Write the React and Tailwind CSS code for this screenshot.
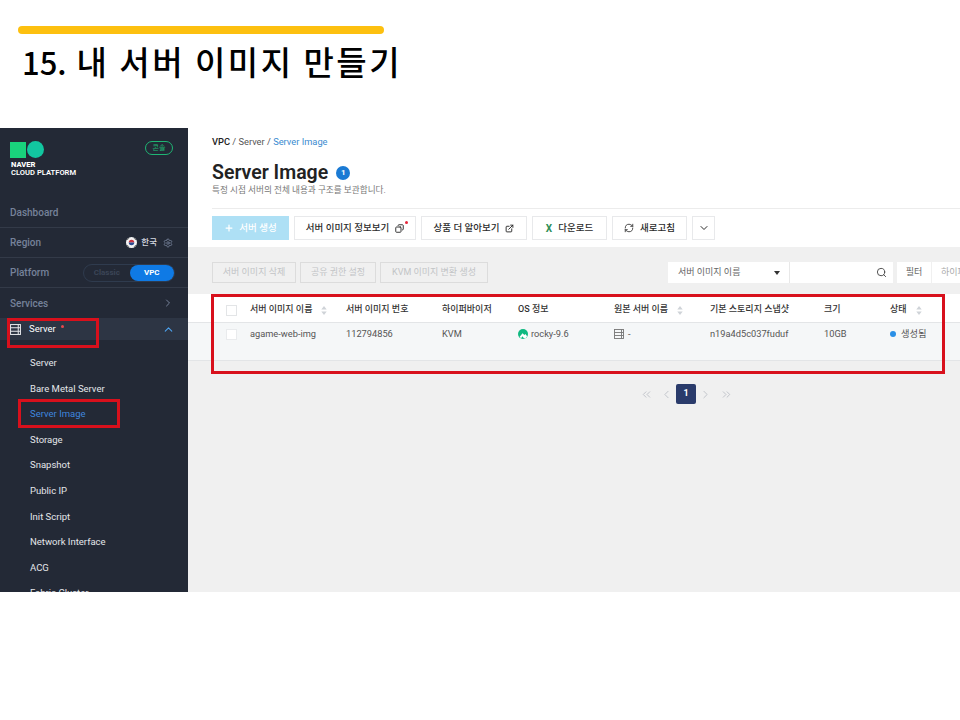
import { ChevronDown, ChevronRight, ChevronUp, ChevronsLeft, ChevronsRight, ChevronLeft, Copy, ExternalLink, RefreshCw, Search, Settings, Plus } from 'lucide-react'

const font = { fontFamily: '"Roboto", "Noto Sans CJK KR", sans-serif' }

const subMenu = ['Server', 'Bare Metal Server', 'Server Image', 'Storage', 'Snapshot', 'Public IP', 'Init Script', 'Network Interface', 'ACG', 'Fabric Cluster']

const ServerIcon = ({ className }) => (
    <svg viewBox="0 0 12 12" className={className} fill="none" stroke="currentColor" strokeWidth="1.1">
        <rect x="0.6" y="0.6" width="10.8" height="10.8" />
        <path d="M0.6 4.2H11.4M0.6 7.8H11.4M9 0.6V11.4" />
    </svg>
)

const Sort = () => (
    <svg viewBox="0 0 6 10" className="w-[6px] h-[9px] text-[#cfd3d8]" fill="currentColor">
        <path d="M3 0L6 4H0ZM3 10L0 6H6Z" />
    </svg>
)

const Flag = () => (
    <svg viewBox="0 0 12 12" className="w-[11px] h-[11px]">
        <circle cx="6" cy="6" r="6" fill="#f4f4f4" />
        <path d="M3 6A3 3 0 0 1 9 6Z" fill="#c8323f" />
        <path d="M3 6A3 3 0 0 0 9 6Z" fill="#2b4a8f" />
        <path d="M1.5 3L3 1.5M9 1.5L10.5 3M1.5 9L3 10.5M9 10.5L10.5 9" stroke="#333" strokeWidth="1" />
    </svg>
)

const Sidebar = () => (
    <div className="w-[188px] h-full bg-[#232936] overflow-hidden shrink-0 flex flex-col">
        <div className="h-[67px] shrink-0 pl-[10px] pr-[15px] pt-[13px] flex justify-between">
            <div>
                <div className="flex items-center gap-[1px]">
                    <div className="w-[16px] h-[16px] bg-[#19d27c]" />
                    <div className="w-[17px] h-[17px] rounded-full bg-[#12c6a0]" />
                </div>
                <div className="mt-[3px] pl-[1px] text-[7.6px] leading-[8px] text-white font-semibold">
                    <div className="font-extrabold">NAVER</div>
                    <div>CLOUD PLATFORM</div>
                </div>
            </div>
            <div className="w-[28px] h-[14px] rounded-full border border-[#1fb574] text-[#1fb574] text-[7px] leading-[12px] text-center">콘솔</div>
        </div>
        <div className="h-[33px] shrink-0 border-b border-[#333a48] pl-[10px] pt-[2px] flex items-center text-[10px] font-medium text-[#76829a]">Dashboard</div>
        <div className="h-[30px] shrink-0 border-b border-[#333a48] pl-[10px] pr-[15px] flex items-center justify-between text-[10px] font-medium text-[#76829a]">
            Region
            <div className="flex items-center gap-[4px] text-[8.5px] text-[#d5d9e0]">
                <Flag />
                한국
                <span className="ml-[2px] flex"><Settings className="w-[10px] h-[10px] text-[#76829a]" /></span>
            </div>
        </div>
        <div className="h-[30px] shrink-0 border-b border-[#333a48] pl-[10px] pr-[13px] flex items-center justify-between text-[10px] font-medium text-[#76829a]">
            Platform
            <div className="w-[92px] h-[18px] rounded-full border border-[#2f3b4e] flex justify-end text-[8px] font-bold leading-[16px]">
                <span className="w-[46px] text-center text-[#3b4557]">Classic</span>
                <span className="w-[45px] rounded-full bg-[#0f7ae5] text-white text-center">VPC</span>
            </div>
        </div>
        <div className="h-[30px] shrink-0 pl-[10px] pr-[14px] flex items-center justify-between text-[10px] font-medium text-[#76829a]">
            Services
            <ChevronRight className="w-[12px] h-[12px]" />
        </div>
        <div className="h-[22px] shrink-0 bg-[#2d3544] pl-[10px] pr-[13px] flex items-center text-[9.5px] text-white">
            <ServerIcon className="w-[11px] h-[11px] text-[#e6e8ec]" />
            <span className="ml-[8px]">Server</span>
            <span className="w-[3px] h-[3px] rounded-full bg-[#e5484d] ml-[5px] mb-[5px]" />
            <ChevronUp className="w-[13px] h-[13px] ml-auto text-[#4da3f0]" />
        </div>
        <div className="pt-[10px] pl-[30px]">
            {subMenu.map((m) => (
                <div key={m} className={`h-[25.6px] leading-[25.6px] text-[9.5px] whitespace-nowrap ${m === 'Server Image' ? 'text-[#3f86de]' : 'text-[#e4e6ea]'}`}>{m}</div>
            ))}
        </div>
    </div>
)

const ToolButton = ({ className, children }) => (
    <div className={`h-[24px] bg-white border border-[#e8e9eb] flex items-center justify-center gap-[6px] text-[9.5px] font-medium text-[#2b2b2b] shrink-0 ${className}`}>{children}</div>
)

const GhostButton = ({ className, children }) => (
    <div className={`h-[21px] border border-[#dcdcdc] flex items-center justify-center text-[9px] text-[#c2c4c6] ${className}`}>{children}</div>
)

const Th = ({ className, sort, children }) => (
    <div className={`shrink-0 flex items-center text-[9px] font-medium text-[#333] ${className}`}>
        {children}
        {sort && <span className="ml-[9px] flex"><Sort /></span>}
    </div>
)

const Td = ({ className, children }) => (
    <div className={`shrink-0 flex items-center text-[9.25px] text-[#555] ${className}`}>{children}</div>
)

const Table = () => (
    <div className="bg-white">
        <div className="h-[29px] pl-[38px] pt-[4px] flex items-center border-b border-[#e3e5e7]">
            <div className="w-[11px] h-[11px] border border-[#e3e5e7] bg-white mr-[13px] shrink-0" />
            <Th className="w-[96px]" sort>서버 이미지 이름</Th>
            <Th className="w-[96px]">서버 이미지 번호</Th>
            <Th className="w-[76px]">하이퍼바이저</Th>
            <Th className="w-[96px]">OS 정보</Th>
            <Th className="w-[96px]" sort>원본 서버 이름</Th>
            <Th className="w-[114px]">기본 스토리지 스냅샷</Th>
            <Th className="w-[66px]">크기</Th>
            <Th className="w-[50px]" sort>상태</Th>
        </div>
        <div className="h-[38px] pl-[38px] pb-[15px] flex items-center bg-[#f5f7f8] border-b border-[#e3e5e7]">
            <div className="w-[11px] h-[11px] border border-[#e9ebed] bg-white mr-[13px] shrink-0" />
            <Td className="w-[96px]">agame-web-img</Td>
            <Td className="w-[96px]">112794856</Td>
            <Td className="w-[76px]">KVM</Td>
            <Td className="w-[96px]">
                <svg viewBox="0 0 12 12" className="w-[10px] h-[10px] mr-[3px]">
                    <circle cx="6" cy="6" r="6" fill="#10b981" />
                    <path d="M2 9.4L5.5 5.2L7.6 7.3L8.8 6.1L11 8.6L9 11.2H7L5.4 8.6L3.6 11Z" fill="#fff" />
                </svg>
                rocky-9.6
            </Td>
            <Td className="w-[96px]">
                <ServerIcon className="w-[10px] h-[10px] text-[#777] mr-[4px]" /> -
            </Td>
            <Td className="w-[114px]">n19a4d5c037fuduf</Td>
            <Td className="w-[66px]">10GB</Td>
            <Td className="w-[50px]">
                <span className="w-[6px] h-[6px] rounded-full bg-[#2a8fe6] mr-[5px]" />
                생성됨
            </Td>
        </div>
        <div className="h-[11px] bg-[#f0f0f0]" />
    </div>
)

const Main = () => (
    <div className="flex-1 min-w-0 h-full flex flex-col bg-[#f0f0f0] overflow-hidden">
        <div className="h-[119px] shrink-0 bg-white pl-[24px]">
            <div className="pt-[8px] text-[9.3px] leading-[12px] text-[#555]">
                <span className="font-medium text-[#222]">VPC</span> / Server / <span className="text-[#3a8bd0]">Server Image</span>
            </div>
            <div className="mt-[13px] flex items-center h-[24px]">
                <span className="text-[19.5px] font-semibold text-[#222]">Server Image</span>
                <span className="ml-[8px] w-[14px] h-[14px] rounded-full bg-[#1a7ad4] text-white text-[8px] font-bold flex items-center justify-center">1</span>
            </div>
            <div className="-mt-[1px] text-[8.65px] leading-[12px] text-[#777]">특정 시점 서버의 전체 내용과 구조를 보관합니다.</div>
            <div className="mt-[12px] border-t border-[#ececec]" />
            <div className="mt-[7px] flex gap-[5px]">
                <div className="w-[77px] h-[24px] bg-[#aee0f5] flex items-center justify-center gap-[5px] text-[9.5px] font-medium text-white shrink-0">
                    <Plus className="w-[10px] h-[10px]" strokeWidth={3} />
                    서버 생성
                </div>
                <ToolButton className="w-[122px] relative">
                    서버 이미지 정보보기
                    <Copy className="w-[9px] h-[9px] -scale-x-100" strokeWidth={2.5} />
                    <span className="absolute right-[7px] top-[4px] w-[3px] h-[3px] rounded-full bg-[#e5263a]" />
                </ToolButton>
                <ToolButton className="w-[106px]">
                    상품 더 알아보기
                    <ExternalLink className="w-[9px] h-[9px]" strokeWidth={2.5} />
                </ToolButton>
                <ToolButton className="w-[75px]">
                    <span className="text-[#2f8f57] font-bold text-[10px]">X</span>
                    다운로드
                </ToolButton>
                <ToolButton className="w-[75px]">
                    <RefreshCw className="w-[10px] h-[10px]" />
                    새로고침
                </ToolButton>
                <ToolButton className="w-[23px]">
                    <ChevronDown className="w-[12px] h-[12px]" />
                </ToolButton>
            </div>
        </div>
        <div className="pl-[24px] pt-[15px] flex items-center">
            <div className="flex gap-[4px]">
                <GhostButton className="w-[84px]">서버 이미지 삭제</GhostButton>
                <GhostButton className="w-[76px]">공유 권한 설정</GhostButton>
                <GhostButton className="w-[108px]">KVM 이미지 변환 생성</GhostButton>
            </div>
            <div className="ml-[180px] flex shrink-0">
                <div className="w-[121px] h-[21px] bg-white pl-[10px] pr-[9px] flex items-center justify-between text-[9px] text-[#666]">
                    서버 이미지 이름
                    <span className="w-0 h-0 border-x-[3px] border-x-transparent border-t-[4px] border-t-[#333]" />
                </div>
                <div className="w-[104px] h-[21px] bg-white border-l border-[#e8e8e8] pr-[6px] flex items-center justify-end">
                    <Search className="w-[11px] h-[11px] text-[#444]" />
                </div>
                <div className="ml-[4px] w-[34px] h-[21px] bg-white flex items-center justify-center text-[9px] text-[#666]">필터</div>
                <div className="ml-[1px] w-[40px] h-[21px] bg-white pl-[9px] flex items-center text-[9px] text-[#aaa] whitespace-nowrap">하이퍼</div>
            </div>
        </div>
        <div className="mt-[11px]"><Table /></div>
        <div className="mt-[12px] pl-[452px] flex items-center text-[#b6bac2]">
            <ChevronsLeft className="w-[13px] h-[13px]" strokeWidth={1.5} />
            <ChevronLeft className="w-[13px] h-[13px] ml-[7px]" strokeWidth={1.5} />
            <span className="ml-[3px] w-[20px] h-[20px] rounded-[2px] bg-[#2a3b6b] text-white text-[9px] font-bold flex items-center justify-center">1</span>
            <ChevronRight className="w-[13px] h-[13px] ml-[3px]" strokeWidth={1.5} />
            <ChevronsRight className="w-[13px] h-[13px] ml-[8px]" strokeWidth={1.5} />
        </div>
    </div>
)

const App = () => (
    <div className="relative w-[960px] h-[720px] bg-white overflow-hidden" style={font}>
        <div className="h-[128px] pl-[18px] pt-[26px]">
            <div className="w-[366px] h-[8px] rounded-full bg-[#fdc00f]" />
            <div className="mt-[7px] pl-[4px] text-[33px] leading-[40px] font-medium text-black tracking-[2.5px] whitespace-pre" style={{ fontFamily: '"Noto Sans CJK KR", sans-serif' }}><span className="text-[31px] tracking-normal">15.</span> 내 서버 이미지 만들기</div>
        </div>
        <div className="flex h-[464px]">
            <Sidebar />
            <Main />
        </div>
        {/* red marks drawn over the screenshot */}
        <div className="absolute left-[7px] top-[318px] w-[92px] h-[30px] border-[3px] border-[#d8101c]" />
        <div className="absolute left-[18px] top-[399px] w-[102px] h-[29px] border-[3px] border-[#d8101c]" />
        <div className="absolute left-[211px] top-[294px] w-[734px] h-[80px] border-[3px] border-[#d8101c]" />
    </div>
)

export default App
